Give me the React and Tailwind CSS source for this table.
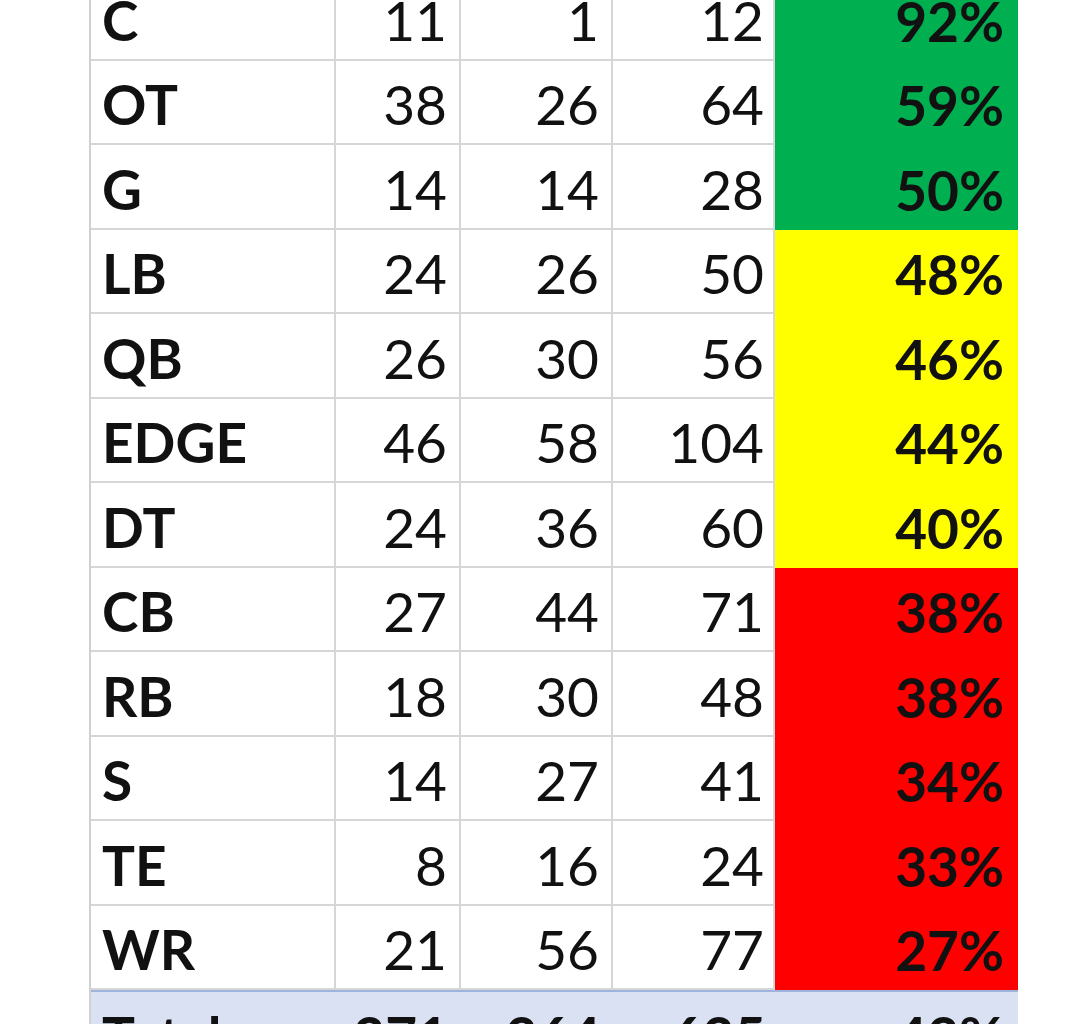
const rows = [
  { pos: 'C', won: 11, lost: 1, total: 12, pct: '92%', band: 'green' },
  { pos: 'OT', won: 38, lost: 26, total: 64, pct: '59%', band: 'green' },
  { pos: 'G', won: 14, lost: 14, total: 28, pct: '50%', band: 'green' },
  { pos: 'LB', won: 24, lost: 26, total: 50, pct: '48%', band: 'yellow' },
  { pos: 'QB', won: 26, lost: 30, total: 56, pct: '46%', band: 'yellow' },
  { pos: 'EDGE', won: 46, lost: 58, total: 104, pct: '44%', band: 'yellow' },
  { pos: 'DT', won: 24, lost: 36, total: 60, pct: '40%', band: 'yellow' },
  { pos: 'CB', won: 27, lost: 44, total: 71, pct: '38%', band: 'red' },
  { pos: 'RB', won: 18, lost: 30, total: 48, pct: '38%', band: 'red' },
  { pos: 'S', won: 14, lost: 27, total: 41, pct: '34%', band: 'red' },
  { pos: 'TE', won: 8, lost: 16, total: 24, pct: '33%', band: 'red' },
  { pos: 'WR', won: 21, lost: 56, total: 77, pct: '27%', band: 'red' },
];

const bandClass = {
  green: 'bg-[#00b050]',
  yellow: 'bg-[#ffff00]',
  red: 'bg-[#ff0000]',
};

const cols = 'grid grid-cols-[245px_125px_152px_162px_243px]';
const cell = 'flex items-center pt-[6px] border-b-2 border-r-2 border-[#d6d6d6]';

export default function App() {
  return (
    <div
      className="w-[1080px] h-[1024px] overflow-hidden bg-white text-[#111] text-[55px] leading-none"
      style={{ fontFamily: 'Lato, "Open Sans", sans-serif' }}
    >
      <div className="ml-[89px] -mt-[24px] w-[929px] border-l-2 border-[#d0d0d0]">
        {rows.map((r) => (
          <div key={r.pos} className={`${cols} h-[84.5px]`}>
            <div className={`${cell} pl-[11px] font-bold`}>{r.pos}</div>
            <div className={`${cell} justify-end pr-[12px]`}>{r.won}</div>
            <div className={`${cell} justify-end pr-[12px]`}>{r.lost}</div>
            <div className={`${cell} justify-end pr-[9px]`}>{r.total}</div>
            <div className={`flex items-center justify-end pt-[6px] pr-[14px] font-bold ${bandClass[r.band]}`}>
              {r.pct}
            </div>
          </div>
        ))}
        <div className={`${cols} h-[84.5px] bg-[#d9e1f2] border-t-2 border-[#9fb4dc] font-bold`}>
          <div className="flex items-center pt-[6px] pl-[11px]">Total</div>
          <div className="flex items-center justify-end pt-[6px] pr-[12px]">271</div>
          <div className="flex items-center justify-end pt-[6px] pr-[12px]">364</div>
          <div className="flex items-center justify-end pt-[6px] pr-[9px]">635</div>
          <div className="flex items-center justify-end pt-[6px] pr-[14px]">43%</div>
        </div>
      </div>
    </div>
  );
}
